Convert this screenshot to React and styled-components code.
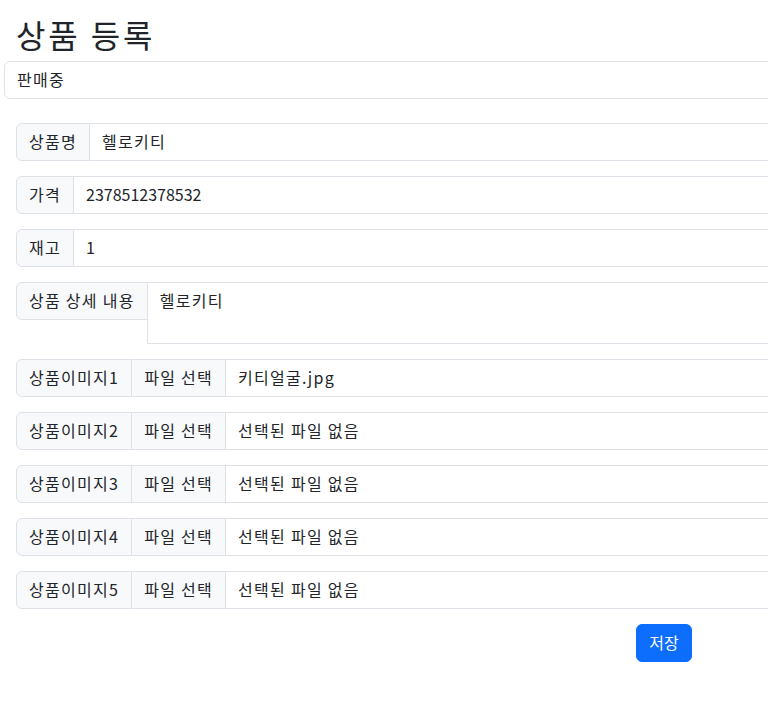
import React from 'react';
import styled, { createGlobalStyle } from 'styled-components';

const GlobalStyle = createGlobalStyle`
  html, body {
    margin: 0;
    overflow-x: hidden;
    background: #fff;
  }
  body {
    font-family: "Noto Sans CJK KR", Roboto, sans-serif;
    font-size: 16px;
    line-height: 1.5;
    color: #212529;
    letter-spacing: 0.08em;
  }
  * {
    box-sizing: border-box;
  }
`;

const Page = styled.div`
  padding: 15px 0 40px;
`;

const Title = styled.h2`
  margin: 0 0 8px;
  padding-left: 16px;
  font-size: 32px;
  font-weight: 400;
  line-height: 38px;
  letter-spacing: 0.09em;
`;

const StatusSelect = styled.div`
  margin-left: 4px;
  width: 1400px;
  height: 38px;
  padding: 5px 36px 7px 12px;
  border: 1px solid #dee2e6;
  border-radius: 6px;
  background: #fff;
  line-height: 24px;
`;

const Form = styled.div`
  width: 1296px;
  margin: 24px 0 0 16px;
  display: flex;
  flex-direction: column;
  gap: 15px;
`;

const InputGroup = styled.div`
  display: flex;
  align-items: flex-start;
`;

const Addon = styled.span`
  flex: none;
  height: 38px;
  padding: 5px 12px 7px;
  line-height: 24px;
  white-space: nowrap;
  background: #f8f9fa;
  border: 1px solid #dee2e6;
  border-radius: 6px 0 0 6px;
`;

const Field = styled.div`
  flex: 1;
  height: ${(p) => (p.tall ? '62px' : '38px')};
  margin-left: -1px;
  padding: 5px 12px 7px;
  line-height: 24px;
  letter-spacing: ${(p) => (p.numeric ? '0' : '0.08em')};
  background: #fff;
  border: 1px solid #dee2e6;
  border-radius: 0 6px 6px 0;
`;

const FileField = styled.div`
  flex: 1;
  display: flex;
  height: 38px;
  margin-left: -1px;
  line-height: 24px;
  background: #fff;
  border: 1px solid #dee2e6;
  border-radius: 0 6px 6px 0;
  overflow: hidden;
`;

const FileButton = styled.span`
  padding: 5px 12px 7px;
  background: #f8f9fa;
  border-right: 1px solid #dee2e6;
  white-space: nowrap;
`;

const FileName = styled.span`
  padding: 5px 12px 7px;
  white-space: nowrap;
`;

const Actions = styled.div`
  display: flex;
  justify-content: center;
`;

const SaveButton = styled.button`
  height: 38px;
  padding: 5px 12px 7px;
  font: inherit;
  line-height: 24px;
  color: #fff;
  background: #0d6efd;
  border: 1px solid #0d6efd;
  border-radius: 6px;
`;

const fields = [
  { label: '상품명', value: '헬로키티' },
  { label: '가격', value: '2378512378532', numeric: true },
  { label: '재고', value: '1', numeric: true },
];

const images = ['키티얼굴.jpg', null, null, null, null];

export default function App() {
  return (
    <Page>
      <GlobalStyle />
      <Title>상품 등록</Title>
      <StatusSelect>판매중</StatusSelect>
      <Form>
        {fields.map((f) => (
          <InputGroup key={f.label}>
            <Addon>{f.label}</Addon>
            <Field numeric={f.numeric}>{f.value}</Field>
          </InputGroup>
        ))}
        <InputGroup>
          <Addon>상품 상세 내용</Addon>
          <Field tall>헬로키티</Field>
        </InputGroup>
        {images.map((name, i) => (
          <InputGroup key={i}>
            <Addon>상품이미지{i + 1}</Addon>
            <FileField>
              <FileButton>파일 선택</FileButton>
              <FileName>{name || '선택된 파일 없음'}</FileName>
            </FileField>
          </InputGroup>
        ))}
        <Actions>
          <SaveButton>저장</SaveButton>
        </Actions>
      </Form>
    </Page>
  );
}
